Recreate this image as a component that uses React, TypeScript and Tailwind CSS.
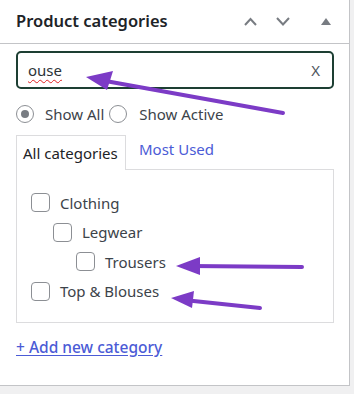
import React from "react";

const font = { fontFamily: '"Noto Sans", "Open Sans", Arial, sans-serif' };

const Checkbox = () => (
  <span className="inline-block w-[19px] h-[19px] shrink-0 rounded-[4px] border border-[#8c8f94] bg-white" />
);

const categories = [
  { name: "Clothing", depth: 0 },
  { name: "Legwear", depth: 1 },
  { name: "Trousers", depth: 2 },
  { name: "Top & Blouses", depth: 0 },
];

const indent = ["pl-[14px]", "pl-[36px]", "pl-[59px]"];

const Arrows = () => (
  <svg className="absolute inset-0 pointer-events-none" width="354" height="394" viewBox="0 0 354 394">
    <g stroke="#7c3bc6" strokeWidth="4" strokeLinecap="round" fill="#7c3bc6">
      <line x1="283" y1="113" x2="100" y2="80" />
      <line x1="302" y1="267" x2="190" y2="266" />
      <line x1="260" y1="308" x2="184" y2="300" />
    </g>
    <g fill="#7c3bc6">
      <polygon points="86,77 113,71 107,90" />
      <polygon points="176,266 200,257 200,275" />
      <polygon points="171,298 194,291 192,308" />
    </g>
  </svg>
);

export default function App() {
  return (
    <div className="relative w-[354px] h-[394px] bg-[#f0f0f1] overflow-hidden" style={font}>
      <div className="w-[350px] h-[386px] bg-white border-r border-b border-[#c3c4c7] flex flex-col">
        <div className="h-[44px] border-b border-[#c3c4c7] flex items-center pl-[16px] pr-[18px]">
          <h2 className="text-[16.5px] font-semibold text-[#1d2327] flex-1 leading-none">Product categories</h2>
          <div className="flex items-center gap-[19px] text-[#787c82]">
            <svg width="13" height="9" viewBox="0 0 13 9" fill="none" stroke="currentColor" strokeWidth="2">
              <path d="M1 8 L6.5 2 L12 8" />
            </svg>
            <svg width="14" height="9" viewBox="0 0 14 9" fill="none" stroke="currentColor" strokeWidth="2">
              <path d="M1 1 L7 7.5 L13 1" />
            </svg>
            <svg className="ml-[12px]" width="10" height="7" viewBox="0 0 10 7" fill="currentColor">
              <path d="M5 0 L10 7 L0 7 Z" />
            </svg>
          </div>
        </div>

        <div className="pl-[16px] pr-[15px] pt-[7px]">
          <div className="h-[38px] border-2 border-[#1d3f33] rounded-[5px] flex items-center pl-[10px] pr-[12px]">
            <span className="flex-1 text-[15px] text-[#2c3338] underline decoration-wavy decoration-[#e02020] underline-offset-[3px] decoration-1">
              ouse
            </span>
            <span className="text-[15px] text-[#50575e]">X</span>
          </div>

          <div className="mt-[16px] flex items-center text-[15px] text-[#3c434a] h-[18px]">
            <span className="w-[18px] h-[18px] rounded-full border border-[#8c8f94] flex items-center justify-center">
              <span className="w-[8px] h-[8px] rounded-full bg-[#787c82]" />
            </span>
            <span className="ml-[11px]">Show All</span>
            <span className="ml-[5px] w-[18px] h-[18px] rounded-full border border-[#8c8f94]" />
            <span className="ml-[12px]">Show Active</span>
          </div>

          <div className="mt-[12px] flex items-end text-[15px]">
            <div className="relative z-10 -mb-px h-[35px] w-[110px] border border-b-0 border-[#dcdcde] bg-white flex items-center pl-[6px] text-[#1d2327]">
              All categories
            </div>
            <span className="ml-[13px] mb-[9px] text-[#4b5bd6]">Most Used</span>
          </div>
          <div className="w-[318px] border border-[#dcdcde] pt-[18px] pb-[16px] flex flex-col">
            {categories.map((c) => (
              <div key={c.name} className={`h-[29.5px] flex items-center ${indent[c.depth]} text-[15px] text-[#3c434a]`}>
                <Checkbox />
                <span className="ml-[10px]">{c.name}</span>
              </div>
            ))}
          </div>

          <a className="block mt-[13px] text-[15.5px] font-medium text-[#4b5bd6] underline underline-offset-2">
            + Add new category
          </a>
        </div>
      </div>
      <Arrows />
    </div>
  );
}
